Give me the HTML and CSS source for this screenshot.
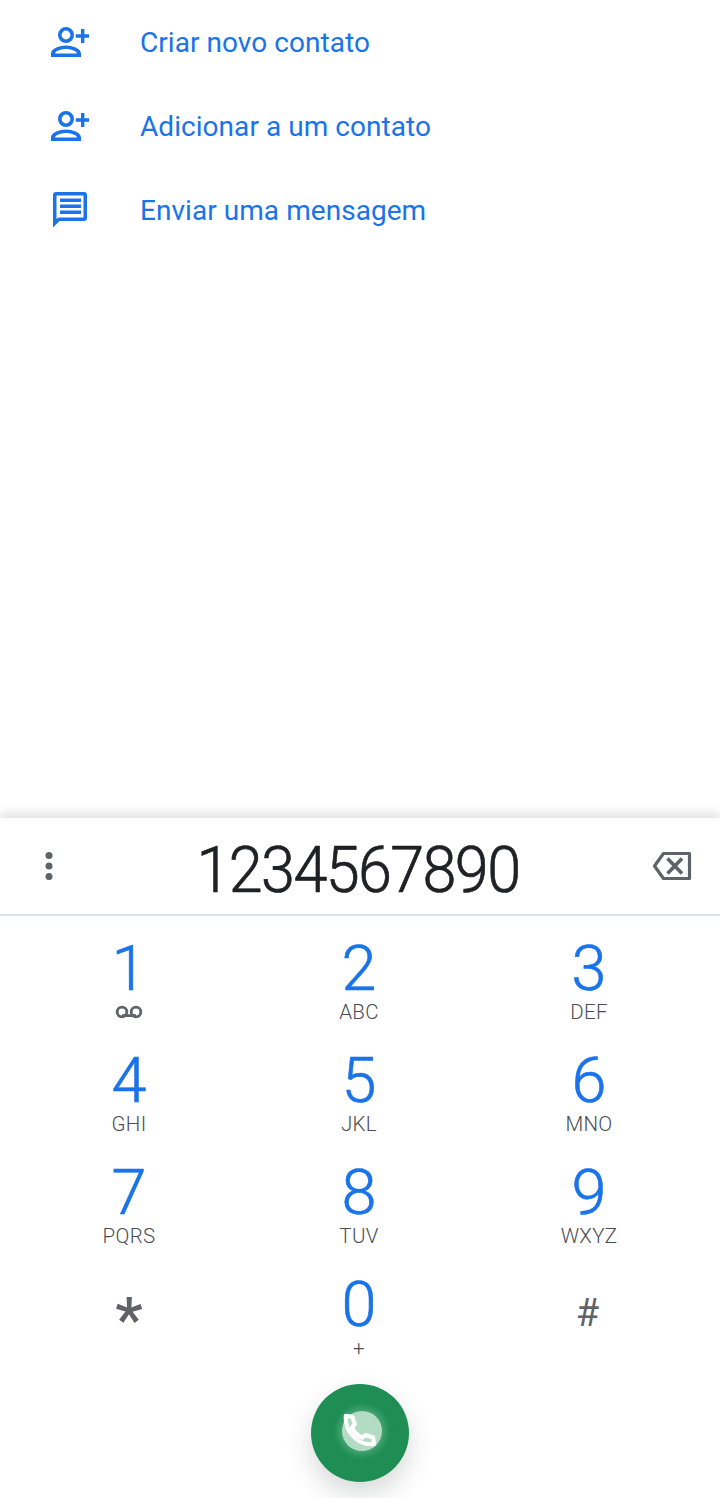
FILE: index.html
```html
<!DOCTYPE html>
<html lang="pt">
<head>
<meta charset="utf-8">
<title>Telefone</title>
<link rel="stylesheet" href="styles.css">
</head>
<body>
<div class="page">
  <ul class="actions">
    <li class="action">
      <svg class="action-icon" viewBox="0 0 40 40"><path fill="#1a73e8" d="M17 5a8 8 0 1 1 0 16 8 8 0 0 1 0-16zm0 3.600a4.400 4.400 0 1 0 0 8.800 4.400 4.400 0 0 0 0-8.800zM17 23.500c6 0 15 2.800 15 8v3.500H2v-3.500c0-5.200 9-8 15-8zm0 3.500c-5 0-11 2.200-11 4.500h22c0-2.300-6-4.500-11-4.500zM32 7h3.400v5.300H40.500v3.400h-5.100V21H32v-5.300h-5.300v-3.400H32z"/></svg>
      <span class="action-label">Criar novo contato</span>
    </li>
    <li class="action">
      <svg class="action-icon" viewBox="0 0 40 40"><path fill="#1a73e8" d="M17 5a8 8 0 1 1 0 16 8 8 0 0 1 0-16zm0 3.600a4.400 4.400 0 1 0 0 8.800 4.400 4.400 0 0 0 0-8.800zM17 23.500c6 0 15 2.800 15 8v3.500H2v-3.500c0-5.200 9-8 15-8zm0 3.500c-5 0-11 2.200-11 4.500h22c0-2.300-6-4.500-11-4.500zM32 7h3.400v5.300H40.500v3.400h-5.100V21H32v-5.300h-5.300v-3.400H32z"/></svg>
      <span class="action-label">Adicionar a um contato</span>
    </li>
    <li class="action">
      <svg class="action-icon" viewBox="0 0 40 40"><path fill="#1a73e8" fill-rule="evenodd" d="M7 2h28a3 3 0 0 1 3 3v23a3 3 0 0 1-3 3H10.500L4 37.500V5a3 3 0 0 1 3-3zm.5 3.500v23.500l2-1.500h25V5.500z"/><path fill="#1a73e8" d="M11 8.500h21v3.500H11zM11 14.500h21v3.500H11zM11 20.500h21v3.500H11z"/></svg>
      <span class="action-label">Enviar uma mensagem</span>
    </li>
  </ul>

  <section class="dialer">
    <header class="display">
      <svg class="more" viewBox="0 0 10 30"><circle cx="5" cy="4.500" r="3.500"/><circle cx="5" cy="15" r="3.500"/><circle cx="5" cy="25.500" r="3.500"/></svg>
      <div class="number">1234567890</div>
      <svg class="backspace" viewBox="0 0 40 30"><path fill="none" stroke="#5f6368" stroke-width="3.200" stroke-linejoin="round" d="M11.500 2.500H37.500V27.500H11.500L2.500 15z"/><path fill="none" stroke="#5f6368" stroke-width="3.600" d="M15.500 7.500L30 22.500M30 7.500L15.500 22.500"/></svg>
    </header>
    <div class="keypad">
      <div class="key"><span class="digit">1</span>
        <svg class="voicemail" viewBox="0 0 28 14"><circle cx="7" cy="7" r="4.800" fill="none" stroke="#5f6368" stroke-width="2.800"/><circle cx="21" cy="7" r="4.800" fill="none" stroke="#5f6368" stroke-width="2.800"/><path stroke="#5f6368" stroke-width="2.800" d="M7 10.600h14"/></svg>
      </div>
      <div class="key"><span class="digit">2</span><span class="letters">ABC</span></div>
      <div class="key"><span class="digit">3</span><span class="letters">DEF</span></div>
      <div class="key"><span class="digit">4</span><span class="letters">GHI</span></div>
      <div class="key"><span class="digit">5</span><span class="letters">JKL</span></div>
      <div class="key"><span class="digit">6</span><span class="letters">MNO</span></div>
      <div class="key"><span class="digit">7</span><span class="letters">PQRS</span></div>
      <div class="key"><span class="digit">8</span><span class="letters">TUV</span></div>
      <div class="key"><span class="digit">9</span><span class="letters">WXYZ</span></div>
      <div class="key"><span class="symbol star">*</span></div>
      <div class="key"><span class="digit">0</span><span class="letters">+</span></div>
      <div class="key"><span class="symbol hash">#</span></div>
    </div>
    <div class="call-row">
      <div class="call">
        <div class="call-glow">
          <svg class="call-icon" viewBox="0 0 24 24"><path fill="none" stroke="#fff" stroke-width="2.400" stroke-linejoin="round" d="M4 3.500l4 .5 1.500 4.500L7.800 10.500c1.400 2.800 3.500 4.900 6.200 6.200l2-1.700 4.500 1.500.5 4c-9.500 1-17.500-7-17-17z"/></svg>
        </div>
      </div>
    </div>
  </section>
</div>
</body>
</html>
```
FILE: styles.css
```css
* { box-sizing: border-box; }
html, body { margin: 0; padding: 0; background: #fff; }
.page {
  width: 720px;
  height: 1498px;
  overflow: hidden;
  display: flex;
  flex-direction: column;
  font-family: "Roboto", "Liberation Sans", sans-serif;
}
.actions {
  list-style: none;
  margin: 0;
  padding: 0;
  flex: 1;
}
.action {
  height: 84px;
  display: flex;
  align-items: center;
  padding-left: 49px;
  gap: 51px;
}
.action-icon { width: 40px; height: 40px; flex: none; }
.action-label {
  font-size: 28px;
  color: #1a73e8;
  letter-spacing: 0.05px;
}
.dialer {
  height: 680px;
  flex: none;
  background: #fff;
  position: relative;
  box-shadow: 0 -6px 8px rgba(60, 64, 67, 0.13);
}
.display {
  height: 98px;
  border-bottom: 2px solid #dde0e8;
  display: flex;
  align-items: center;
  padding: 0 28px 0 44px;
}
.more { width: 10px; height: 30px; fill: #5f6368; flex: none; }
.number {
  flex: 1;
  text-align: center;
  font-size: 65px;
  font-weight: 300;
  -webkit-text-stroke: 0.7px #202124;
  color: #202124;
  letter-spacing: -1.700px;
  line-height: 104px;
  height: 96px;
  transform: translateX(5px) scaleX(0.94);
}
.backspace { width: 40px; height: 30px; flex: none; }
.keypad {
  display: grid;
  grid-template-columns: repeat(3, 230px);
  grid-auto-rows: 112px;
  padding: 21px 14px 0;
}
.key {
  display: flex;
  flex-direction: column;
  align-items: center;
  height: 112px;
}
.digit {
  font-size: 63px;
  font-weight: 300;
  -webkit-text-stroke: 0.6px #1a73e8;
  line-height: 64px;
  color: #1a73e8;
}
.letters {
  font-size: 20.500px;
  font-weight: 300;
  letter-spacing: 0.3px;
  line-height: 24px;
  color: #4a4d52;
  margin-top: -1px;
}
.voicemail { width: 28px; height: 14px; margin-top: 4px; }
.symbol {
  font-size: 38px;
  line-height: 64px;
  color: #5f6368;
  padding-top: 8px;
}
.hash { margin-left: -3px; }
.star { font-size: 62px; line-height: 88px; font-weight: 500; padding-top: 3px; }
.call-row {
  display: flex;
  justify-content: center;
  position: absolute;
  left: 0;
  right: 0;
  top: 566px;
}
.call {
  width: 98px;
  height: 98px;
  border-radius: 50%;
  background: #1e8e54;
  box-shadow: 0 12px 26px rgba(60, 64, 67, 0.2);
  display: flex;
  align-items: center;
  justify-content: center;
}
.call-glow {
  width: 40px;
  height: 40px;
  border-radius: 50%;
  background: #b4dcc4;
  box-shadow: 0 0 6px 4px rgba(150, 210, 175, 0.35);
  display: flex;
  align-items: center;
  justify-content: center;
  transform: translate(2px, -2px);
}
.call-icon { width: 40px; height: 40px; margin: -2px 0 0 -6px; }
```
